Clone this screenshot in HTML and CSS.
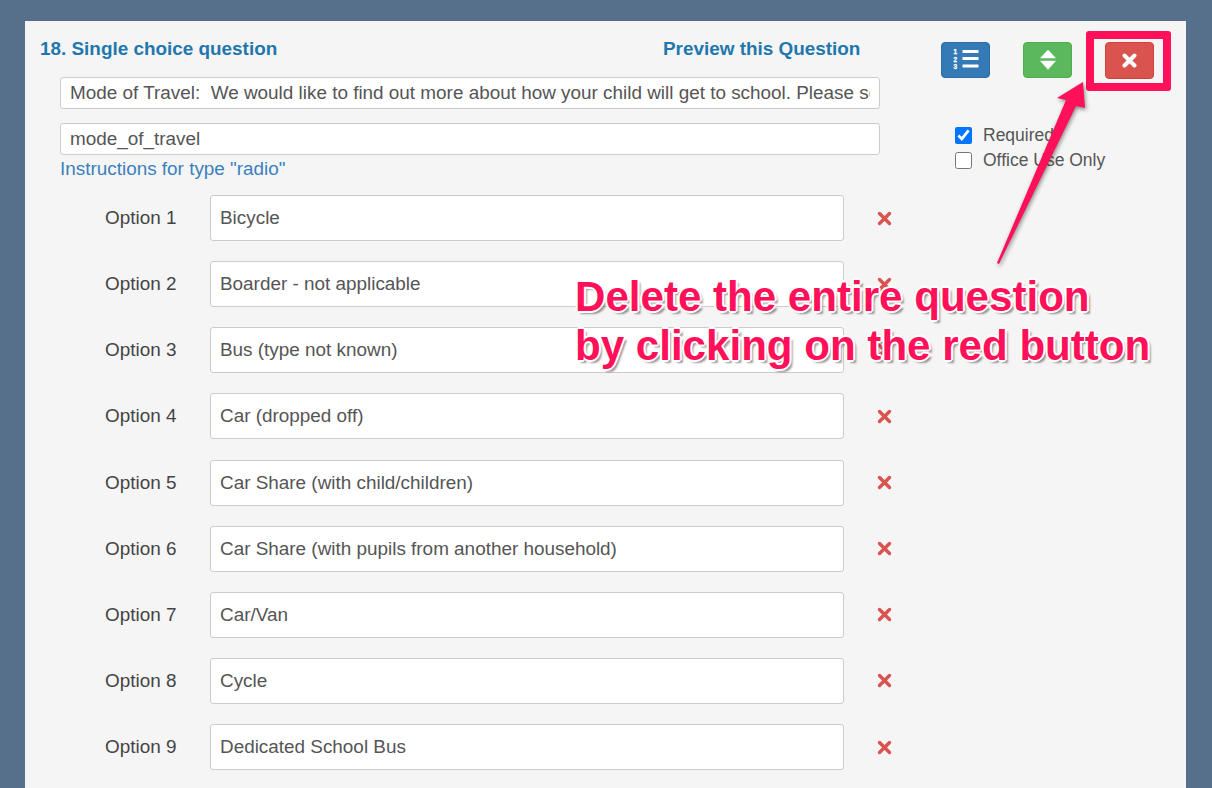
FILE: index.html
```html
<!DOCTYPE html>
<html lang="en">
<head>
  <meta charset="UTF-8" />
  <title>Edit question</title>
  <link rel="stylesheet" href="styles.css">
</head>
<body>
  <div class="panel">
    <div class="top">
      <div class="top-main">
        <div class="head">
          <span class="q-title">18. Single choice question</span>
          <a class="preview" href="#">Preview this Question</a>
        </div>
        <div class="fields">
          <input class="field" type="text" value="Mode of Travel:  We would like to find out more about how your child will get to school. Please select the option that applies">
          <input class="field" type="text" value="mode_of_travel">
          <a class="instructions" href="#">Instructions for type "radio"</a>
        </div>
      </div>
      <div class="top-side">
        <div class="buttons">
          <button class="btn btn-blue" type="button">
            <svg width="26" height="22" viewBox="0 0 26 22">
              <text class="num" x="0.5" y="5">1</text>
              <text class="num" x="0.5" y="12.5">2</text>
              <text class="num" x="0.5" y="20">3</text>
              <rect x="9.5" y="1" width="16" height="3" rx="0.5" fill="#fff"/>
              <rect x="9.5" y="8" width="16" height="3" rx="0.5" fill="#fff"/>
              <rect x="9.5" y="15.5" width="16" height="3" rx="0.5" fill="#fff"/>
            </svg>
          </button>
          <button class="btn btn-green" type="button">
            <svg width="16" height="20" viewBox="0 0 16 20">
              <path d="M8 0 L15.5 8 H0.5 Z M0.5 11 H15.5 L8 19.5 Z" fill="#fff" stroke="#fff" stroke-width="0.5" stroke-linejoin="round"/>
            </svg>
          </button>
          <button class="btn btn-red" type="button">
            <svg width="15" height="15" viewBox="0 0 15 15">
              <path d="M2.5 2.5 L12.5 12.5 M12.5 2.5 L2.5 12.5" stroke="#fff" stroke-width="4" stroke-linecap="round"/>
            </svg>
          </button>
        </div>
        <label class="check"><input type="checkbox" checked> Required</label>
        <label class="check"><input type="checkbox"> Office Use Only</label>
      </div>
    </div>

    <div class="options">
      <div class="option"><span class="opt-label">Option 1</span><input class="opt-input" type="text" value="Bicycle"><svg class="opt-x" width="15" height="15" viewBox="0 0 15 15"><path d="M2.5 2.5 L12.5 12.5 M12.5 2.5 L2.5 12.5"/></svg></div>
      <div class="option"><span class="opt-label">Option 2</span><input class="opt-input" type="text" value="Boarder - not applicable"><svg class="opt-x" width="15" height="15" viewBox="0 0 15 15"><path d="M2.5 2.5 L12.5 12.5 M12.5 2.5 L2.5 12.5"/></svg></div>
      <div class="option"><span class="opt-label">Option 3</span><input class="opt-input" type="text" value="Bus (type not known)"><svg class="opt-x" width="15" height="15" viewBox="0 0 15 15"><path d="M2.5 2.5 L12.5 12.5 M12.5 2.5 L2.5 12.5"/></svg></div>
      <div class="option"><span class="opt-label">Option 4</span><input class="opt-input" type="text" value="Car (dropped off)"><svg class="opt-x" width="15" height="15" viewBox="0 0 15 15"><path d="M2.5 2.5 L12.5 12.5 M12.5 2.5 L2.5 12.5"/></svg></div>
      <div class="option"><span class="opt-label">Option 5</span><input class="opt-input" type="text" value="Car Share (with child/children)"><svg class="opt-x" width="15" height="15" viewBox="0 0 15 15"><path d="M2.5 2.5 L12.5 12.5 M12.5 2.5 L2.5 12.5"/></svg></div>
      <div class="option"><span class="opt-label">Option 6</span><input class="opt-input" type="text" value="Car Share (with pupils from another household)"><svg class="opt-x" width="15" height="15" viewBox="0 0 15 15"><path d="M2.5 2.5 L12.5 12.5 M12.5 2.5 L2.5 12.5"/></svg></div>
      <div class="option"><span class="opt-label">Option 7</span><input class="opt-input" type="text" value="Car/Van"><svg class="opt-x" width="15" height="15" viewBox="0 0 15 15"><path d="M2.5 2.5 L12.5 12.5 M12.5 2.5 L2.5 12.5"/></svg></div>
      <div class="option"><span class="opt-label">Option 8</span><input class="opt-input" type="text" value="Cycle"><svg class="opt-x" width="15" height="15" viewBox="0 0 15 15"><path d="M2.5 2.5 L12.5 12.5 M12.5 2.5 L2.5 12.5"/></svg></div>
      <div class="option"><span class="opt-label">Option 9</span><input class="opt-input" type="text" value="Dedicated School Bus"><svg class="opt-x" width="15" height="15" viewBox="0 0 15 15"><path d="M2.5 2.5 L12.5 12.5 M12.5 2.5 L2.5 12.5"/></svg></div>
    </div>
  </div>

  <!-- annotation drawn on top of the screenshot -->
  <div class="callout-box"></div>
  <svg class="callout-arrow" width="1212" height="788" viewBox="0 0 1212 788">
    <path d="M1083 82 L1057 98 L1066 100 L997 263 L999 264 L1076 106 L1085 108 Z" fill="#ff1059"/>
  </svg>
  <div class="callout-text">Delete the entire question<br>by clicking on the red button</div>
</body>
</html>
```

FILE: styles.css
```css
html, body {
  margin: 0;
  padding: 0;
  height: 100%;
  overflow: hidden;
}

body {
  background: #56708c;
  font-family: "Liberation Sans", Arial, sans-serif;
  font-size: 18.9px;
  color: #444;
  padding: 21px 26px 0 25px;
  box-sizing: border-box;
}

.panel {
  background: #f5f5f5;
  height: 767px;
  padding-left: 15px;
  overflow: hidden;
}

.top {
  display: flex;
}

.top-main {
  width: 840px;
}

.head {
  display: flex;
  height: 56px;
  padding-top: 17px;
  box-sizing: border-box;
  line-height: 21px;
  font-weight: bold;
  color: #1f77ad;
}

.q-title {
  width: 623px;
}

.preview {
  color: #1f77ad;
  text-decoration: none;
}

.fields {
  padding-left: 20px;
  display: flex;
  flex-direction: column;
}

.field {
  height: 32px;
  margin-bottom: 14px;
}

.field, .opt-input {
  box-sizing: border-box;
  border: 1px solid #ccc;
  border-radius: 3px;
  background: #fff;
  padding: 0 9px;
  font-family: inherit;
  font-size: 18.9px;
  color: #555;
  outline: none;
}

.instructions {
  color: #3b80bc;
  text-decoration: none;
  line-height: 21px;
  margin-top: -11px;
  margin-bottom: 1px;
}

.top-side {
  margin-left: 61px;
  padding-top: 21px;
}

.buttons {
  display: flex;
  gap: 33px;
  margin-bottom: 44px;
}

.btn {
  width: 49px;
  height: 36px;
  padding: 0;
  border: 1px solid transparent;
  border-radius: 4px;
  display: flex;
  align-items: center;
  justify-content: center;
}

.btn-blue {
  background: #337ab7;
  border-color: #2e6da4;
}

.btn-green {
  background: #5cb85c;
  border-color: #4cae4c;
}

.btn-red {
  background: #d9534f;
  border-color: #d43f3a;
  height: 37px;
}

.num {
  font-size: 6.5px;
  font-weight: bold;
  fill: #fff;
  stroke: #fff;
  stroke-width: 0.3;
}

.check {
  display: flex;
  align-items: center;
  height: 25px;
  margin-left: 14px;
  font-size: 17.5px;
  color: #555;
}

.check input {
  width: 17px;
  height: 17px;
  margin: 0 11px 0 0;
}

.options {
  margin-top: 15px;
  display: flex;
  flex-direction: column;
  gap: 20.125px;
}

.option {
  display: flex;
  align-items: center;
  height: 46px;
}

.opt-label {
  width: 105px;
  margin-left: 65px;
}

.opt-input {
  width: 634px;
  height: 46px;
}

.opt-x {
  margin-left: 33px;
  fill: none;
  stroke: #d9534f;
  stroke-width: 3.4;
  stroke-linecap: round;
}

.callout-box {
  position: absolute;
  left: 1086px;
  top: 31px;
  width: 85px;
  height: 60px;
  box-sizing: border-box;
  border: 8px solid #ff1059;
  border-radius: 3px;
}

.callout-arrow {
  position: absolute;
  left: 0;
  top: 0;
  filter: drop-shadow(1px 2px 2px rgba(0, 0, 0, 0.45));
  pointer-events: none;
}

.callout-text {
  position: absolute;
  left: 575px;
  top: 272px;
  font-size: 42.1px;
  line-height: 49px;
  font-weight: bold;
  color: #ff1059;
  white-space: nowrap;
  text-shadow:
    -2px 0 0 #fff, 2px 0 0 #fff, 0 -2px 0 #fff, 0 2px 0 #fff,
    -1px -1px 0 #fff, 1px -1px 0 #fff, -1px 1px 0 #fff, 1px 1px 0 #fff,
    3px 3px 2px rgba(0, 0, 0, 0.4);
}
```
